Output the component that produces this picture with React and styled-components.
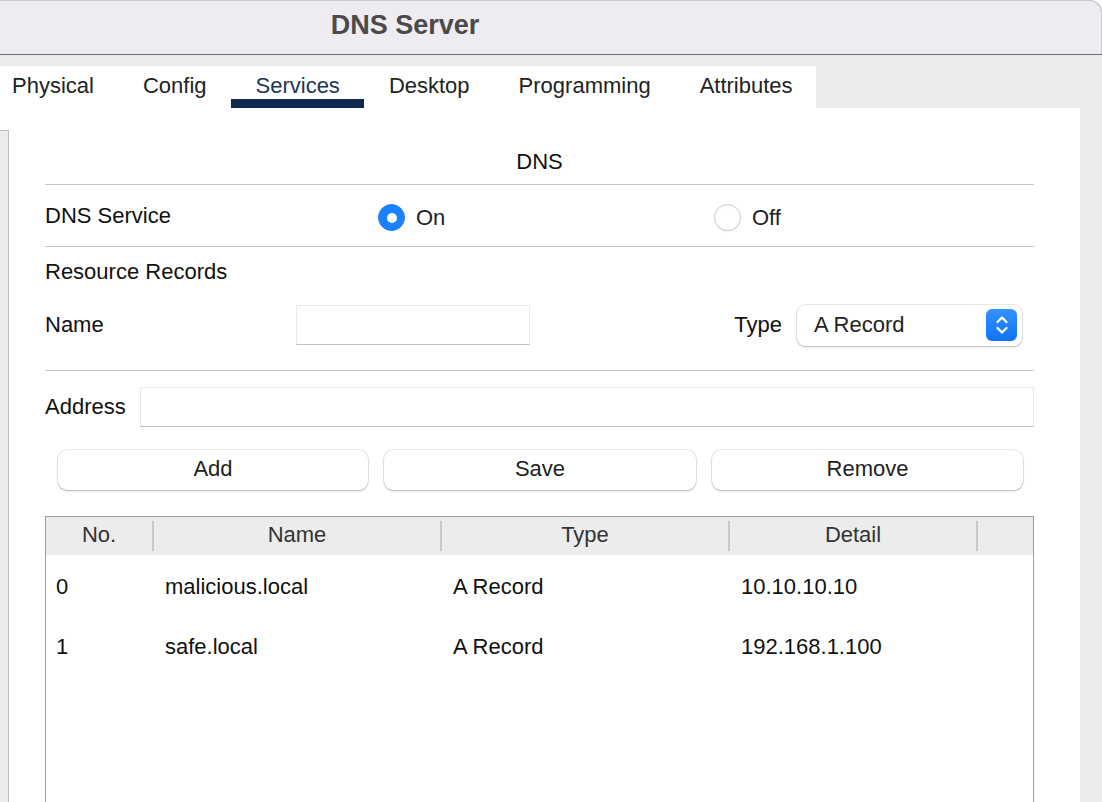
import React from "react";
import styled, { createGlobalStyle } from "styled-components";

/* ---------- GLOBAL ---------- */
const GlobalStyle = createGlobalStyle`
  html, body {
    margin: 0;
    padding: 0;
    background: #ffffff;
  }
  * {
    box-sizing: border-box;
  }
  body {
    font-family: "Liberation Sans", Arial, Helvetica, sans-serif;
    color: #111;
  }
`;

/* ---------- WINDOW ---------- */
const Window = styled.div`
  width: 1102px;
  height: 802px;
  overflow: hidden;
  display: flex;
  flex-direction: column;
  background: #ffffff;
`;

const TitleBar = styled.div`
  height: 55px;
  flex-shrink: 0;
  background: #eeecf1;
  border-bottom: 1px solid #6c6c6c;
  border-top-right-radius: 12px;
  box-shadow: inset -1px 1px 0 #c9c7cc;
  display: flex;
  align-items: center;
  justify-content: center;
  padding-right: 292px;
  padding-bottom: 4px;
`;

const Title = styled.div`
  font-size: 27px;
  font-weight: 700;
  color: #4a4a4a;
`;

const Body = styled.div`
  flex: 1;
  background: #ebebeb;
  padding-top: 11px;
  display: flex;
  flex-direction: column;
`;

/* ---------- TABS ---------- */
const TabStrip = styled.div`
  width: 816px;
  height: 42px;
  background: #ffffff;
  display: flex;
`;

const Tab = styled.div`
  padding: 0 24.5px;
  height: 42px;
  line-height: 40px;
  font-size: 22px;
  color: ${({ active }) => (active ? "#1c3557" : "#222")};
  box-shadow: ${({ active }) => (active ? "inset 0 -9px 0 #0f2a4e" : "none")};

  &:first-child {
    padding-left: 12px;
  }
`;

/* ---------- PANEL ---------- */
const Panel = styled.div`
  flex: 1;
  width: 1080px;
  background: #ffffff;
  display: flex;
`;

const SideStrip = styled.div`
  width: 9px;
  margin-top: 22px;
  background: #ececec;
  border-top: 1px solid #bdbdbd;
  border-right: 1px solid #bdbdbd;
`;

const Form = styled.div`
  width: 989px;
  margin-left: 36px;
  display: flex;
  flex-direction: column;
`;

const SectionTitle = styled.div`
  height: 77px;
  padding-top: 41px;
  line-height: 26px;
  font-size: 22px;
  text-align: center;
  border-bottom: 1px solid #c6c6c6;
`;

const ServiceRow = styled.div`
  height: 62px;
  display: grid;
  grid-template-columns: 333px 336px 1fr;
  align-items: center;
  border-bottom: 1px solid #c6c6c6;
`;

const Label = styled.div`
  font-size: 22px;
  line-height: 26px;
  color: #111;
  width: ${({ w }) => (w ? `${w}px` : "auto")};
  flex-shrink: 0;
`;

const RadioOption = styled.div`
  display: flex;
  align-items: center;
  gap: 11px;
  font-size: 22px;
  color: #222;
  padding-top: 4px;
`;

const Radio = styled.div`
  width: 27px;
  height: 27px;
  border-radius: 50%;
  display: flex;
  align-items: center;
  justify-content: center;
  background: ${({ checked }) => (checked ? "#1a82ff" : "#ffffff")};
  border: 1px solid ${({ checked }) => (checked ? "#1a7af5" : "#d0d0d0")};
  box-shadow: ${({ checked }) =>
    checked ? "none" : "inset 0 1px 2px rgba(0,0,0,0.06), 0 0.5px 1px rgba(0,0,0,0.12)"};

  &::after {
    content: "";
    width: 10px;
    height: 10px;
    border-radius: 50%;
    background: #ffffff;
    display: ${({ checked }) => (checked ? "block" : "none")};
  }
`;

const RecordsBlock = styled.div`
  padding-top: 12px;
  padding-bottom: 5px;
  border-bottom: 1px solid #c6c6c6;
`;

const FieldRow = styled.div`
  display: flex;
  align-items: center;
  height: ${({ h }) => h}px;
`;

const TextInput = styled.div`
  width: ${({ w }) => (w ? `${w}px` : "auto")};
  flex: ${({ w }) => (w ? "0 0 auto" : "1")};
  height: 40px;
  background: #ffffff;
  border: 1px solid #e8e8e8;
  border-bottom: 1px solid #bfbfbf;
`;

const Spacer = styled.div`
  flex: 1;
`;

const Select = styled.div`
  width: 225px;
  height: 41px;
  margin-left: 15px;
  margin-right: 12px;
  border-radius: 8px;
  background: #ffffff;
  box-shadow: 0 0 0 0.5px rgba(0, 0, 0, 0.16), 0 1px 2px rgba(0, 0, 0, 0.22);
  display: flex;
  align-items: center;
  justify-content: space-between;
  padding: 0 5px 0 17px;
  font-size: 22px;
  color: #222;
`;

const Stepper = styled.div`
  width: 31px;
  height: 32px;
  border-radius: 6px;
  background: linear-gradient(#3491ff, #0d74f7);
  display: flex;
  align-items: center;
  justify-content: center;
`;

const AddressRow = styled.div`
  display: flex;
  align-items: center;
  padding-top: 16px;
`;

const ButtonRow = styled.div`
  display: grid;
  grid-template-columns: 310px 312px 311px;
  column-gap: 16px;
  padding: 0 12px 0 13px;
  margin-top: 23px;
`;

const Button = styled.div`
  height: 40px;
  border-radius: 9px;
  background: #ffffff;
  box-shadow: 0 0 0 0.5px rgba(0, 0, 0, 0.14), 0 1px 2px rgba(0, 0, 0, 0.24);
  display: flex;
  align-items: center;
  justify-content: center;
  font-size: 22px;
  color: #222;
  padding-bottom: 3px;
`;

/* ---------- TABLE ---------- */
const Table = styled.div`
  margin-top: 26px;
  height: 320px;
  flex-shrink: 0;
  border: 1px solid #9e9e9e;
  border-bottom: none;
`;

const COLS = "108px 288px 288px 248px 1fr";

const HeaderRow = styled.div`
  display: grid;
  grid-template-columns: ${COLS};
  background: #ececec;
  padding: 4px 0;
`;

const HeaderCell = styled.div`
  height: 30px;
  line-height: 28px;
  text-align: center;
  font-size: 22px;
  color: #333;
  border-right: ${({ last }) => (last ? "none" : "2px solid #c8c8c8")};
`;

const DataRow = styled.div`
  display: grid;
  grid-template-columns: ${COLS};
  height: 60px;
  align-items: center;
  padding-top: 3px;
`;

const Cell = styled.div`
  padding-left: ${({ first }) => (first ? 10 : 11)}px;
  font-size: 22px;
  line-height: 26px;
  color: #111;
  white-space: nowrap;
`;

const tabs = ["Physical", "Config", "Services", "Desktop", "Programming", "Attributes"];

const records = [
  { no: 0, name: "malicious.local", type: "A Record", detail: "10.10.10.10" },
  { no: 1, name: "safe.local", type: "A Record", detail: "192.168.1.100" },
];

function StepperIcon() {
  return (
    <svg width="16" height="24" viewBox="0 0 16 24" fill="none">
      <path d="M3.5 9 L8 4.5 L12.5 9" stroke="#fff" strokeWidth="2.2" strokeLinecap="round" strokeLinejoin="round" />
      <path d="M3.5 15 L8 19.5 L12.5 15" stroke="#fff" strokeWidth="2.2" strokeLinecap="round" strokeLinejoin="round" />
    </svg>
  );
}

export default function App() {
  return (
    <Window>
      <GlobalStyle />
      <TitleBar>
        <Title>DNS Server</Title>
      </TitleBar>

      <Body>
        <TabStrip>
          {tabs.map((t) => (
            <Tab key={t} active={t === "Services"}>
              {t}
            </Tab>
          ))}
        </TabStrip>

        <Panel>
          <SideStrip />
          <Form>
            <SectionTitle>DNS</SectionTitle>

            <ServiceRow>
              <Label>DNS Service</Label>
              <RadioOption>
                <Radio checked />
                On
              </RadioOption>
              <RadioOption>
                <Radio />
                Off
              </RadioOption>
            </ServiceRow>

            <RecordsBlock>
              <Label>Resource Records</Label>
              <FieldRow h={80}>
                <Label w={251}>Name</Label>
                <TextInput w={234} />
                <Spacer />
                <Label>Type</Label>
                <Select>
                  A Record
                  <Stepper>
                    <StepperIcon />
                  </Stepper>
                </Select>
              </FieldRow>
            </RecordsBlock>

            <AddressRow>
              <Label w={95}>Address</Label>
              <TextInput />
            </AddressRow>

            <ButtonRow>
              <Button>Add</Button>
              <Button>Save</Button>
              <Button>Remove</Button>
            </ButtonRow>

            <Table>
              <HeaderRow>
                <HeaderCell>No.</HeaderCell>
                <HeaderCell>Name</HeaderCell>
                <HeaderCell>Type</HeaderCell>
                <HeaderCell>Detail</HeaderCell>
                <HeaderCell last />
              </HeaderRow>
              {records.map((r) => (
                <DataRow key={r.no}>
                  <Cell first>{r.no}</Cell>
                  <Cell>{r.name}</Cell>
                  <Cell>{r.type}</Cell>
                  <Cell>{r.detail}</Cell>
                  <Cell />
                </DataRow>
              ))}
            </Table>
          </Form>
        </Panel>
      </Body>
    </Window>
  );
}
